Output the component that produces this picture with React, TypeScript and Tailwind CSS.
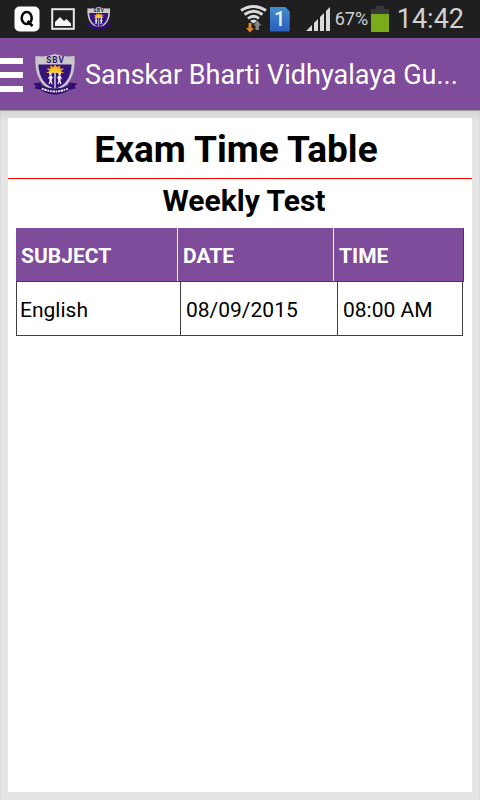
import React from "react";

const columns = ["SUBJECT", "DATE", "TIME"];
const exams = [{ subject: "English", date: "08/09/2015", time: "08:00 AM" }];

function Crest({ className, ribbonText = true }: { className: string; ribbonText?: boolean }) {
  return (
    <svg viewBox="0 0 46 42" preserveAspectRatio="none" className={className} aria-hidden="true">
      <path d="M2.500 2 Q13 3.500 22.500 0 Q32 3.500 42.500 2 Q43.500 17 38 26 Q34 33 22.500 38 Q11 33 7 26 Q1.500 17 2.500 2Z" fill="#c9c7ca" />
      <path d="M5.500 10.500 H39.500 Q39 20 35 26 Q31 32 22.500 35 Q14 32 10 26 Q6 20 5.500 10.500Z" fill="#35127c" />
      <path d="M13 19 L17 17 L13.500 14.500 L18 14.500 L17.500 11.500 L21 13 L22.500 10.500 L24.500 13 L28 11.500 L27.500 14.500 L32 14.500 L28.500 17 L32 19Z" fill="#f6a81b" />
      <path d="M16 19 Q22.500 9 29 19Z" fill="#ffcb2e" />
      <path d="M22.500 17 V35" stroke="#c9c7ca" strokeWidth="1.600" />
      <circle cx="17.800" cy="19.800" r="1.300" fill="#fff" />
      <circle cx="27.200" cy="19.800" r="1.300" fill="#fff" />
      <path d="M18 21.500 v5 M27 21.500 v5" stroke="#fff" strokeWidth="2.400" fill="none" />
      <path d="M15.800 24.500 l2 -2 l2.500 1.500 M18 26 l-1.500 4 M18 26 l1.500 4 M29.200 24.500 l-2 -2 l-2.500 1.500 M27 26 l-1.500 4 M27 26 l1.500 4" stroke="#fff" strokeWidth="1.200" fill="none" />
      <path d="M0 29.500 L8 28.500 L9 31.500 Q22.500 37.500 36 31.500 L37 28.500 L45.500 29.500 L42.500 32 L44 34.500 L38 35.500 Q22.500 45.500 7 35.500 L1.500 34.500 L3 32Z" fill="#2c0e6b" />
      <text x="23" y="8.800" textAnchor="middle" fontSize="8.500" fontWeight="700" letterSpacing="1" fill="#2c1464" fontFamily="Roboto, sans-serif">SBV</text>
      {ribbonText && <path d="M9 34.500 Q22.500 40.500 36 34.500" stroke="#e4dfee" strokeWidth="2" strokeDasharray="2 .6 3 .6 1.500 .8" fill="none" />}
    </svg>
  );
}

function StatusBar() {
  return (
    <div className="flex h-[38px] items-center justify-between bg-[#1f1f1f] pr-4 pl-[14px] text-[#d2d2d2]">
      <div className="flex items-center gap-[11px]">
        <svg viewBox="0 0 26 26" className="size-[26px]" aria-hidden="true">
          <rect x=".5" y=".5" width="25" height="25" rx="5" fill="#fff" />
          <ellipse cx="12.700" cy="12" rx="5" ry="6" fill="none" stroke="#050505" strokeWidth="2.600" />
          <path d="M13.500 15 L18.500 20" stroke="#050505" strokeWidth="2.600" />
        </svg>
        <svg viewBox="0 0 24 22" className="h-[22px] w-6" aria-hidden="true">
          <rect x="1.200" y="1.200" width="21.600" height="19.600" fill="none" stroke="#e9e9e9" strokeWidth="2" />
          <path d="M4 18 V14 L9 9 L13 13 L15.500 11 L20 15.500 V18Z" fill="#f4f4f4" />
        </svg>
        <Crest className="h-6 w-[26px]" ribbonText={false} />
      </div>
      <div className="flex items-center">
        <svg viewBox="0 0 28 28" className="mr-[2px] h-7 w-7" aria-hidden="true">
          <g fill="none" stroke="#dcdcdc" strokeWidth="2.800">
            <path d="M1 5.500 Q13.500 -2.500 26 5.500" />
            <path d="M4.500 9.500 Q13.500 3 22.500 9.500" />
            <path d="M8 13.500 Q13.500 9 19 13.500" />
          </g>
          <path d="M10 16 Q13.500 13 17 16 L13.500 18.500Z" fill="#dcdcdc" />
          <path d="M8.500 18 h3 v5 h2.500 L10 27.500 L6 23 H8.500Z" fill="#df8b2c" />
          <path d="M15.500 25 V20.500 H13.500 L17.300 15.500 L21.500 20.500 H19 V25Z" fill="#858585" />
        </svg>
        <div className="grid h-[25px] w-5 place-items-center bg-linear-to-b from-[#438fcb] to-[#2c5cbc] text-xl leading-6 font-medium text-[#eeeeee] [clip-path:polygon(0_0,76%_0,100%_20%,100%_100%,0_100%)]">1</div>
        <svg viewBox="0 0 24 24" className="ml-4 size-6" aria-hidden="true">
          <path d="M0 24 L6 18 V24Z M8 16 L12 12 V24 H8Z M14 10 L18 6 V24 H14Z M20 4 L24 0 V24 H20Z" fill="#dadada" />
        </svg>
        <span className="ml-[5px] w-[33px] text-lg">67%</span>
        <svg viewBox="0 0 18 26" className="ml-[3px] h-[26px] w-[18px]" aria-hidden="true">
          <path d="M0 3 H5 V0 H13 V3 H18 V26 H0Z" fill="#393939" />
          <path d="M0 8 H18 V26 H0Z" fill="#7aac19" />
        </svg>
        <span className="ml-2 text-[27px] leading-8">14:42</span>
      </div>
    </div>
  );
}

export default function App() {
  return (
    <div className="flex min-h-screen flex-col bg-[#e4e4e4] font-[Roboto,sans-serif] text-black">
      <StatusBar />
      <header className="flex h-[72px] items-center bg-[#7f4b9b] pt-[2px] pr-4">
        <button type="button" aria-label="Open menu" className="flex w-[33px] shrink-0 items-center">
          <span className="flex w-[23px] flex-col gap-2">
            <span className="h-[6px] bg-white" />
            <span className="h-[6px] bg-white" />
            <span className="h-[6px] bg-white" />
          </span>
        </button>
        <Crest className="h-[42px] w-[45px] shrink-0" />
        <h1 className="ml-[7px] truncate text-[27px] leading-9 text-white">Sanskar Bharti Vidhyalaya Gu...</h1>
      </header>
      <div className="flex grow flex-col bg-linear-to-b from-[#d5d5d5] to-[#e4e4e4] to-[12px] p-2 shadow-[inset_0_1px_1px_#999999]">
        <main className="grow bg-white">
          <h2 className="border-b border-[#ff0000] pt-2 pr-2 pb-1 text-center text-[37px] leading-12 font-bold">Exam Time Table</h2>
          <h3 className="pt-1 pb-[9px] pl-2 text-center text-[30px] leading-9 font-bold">Weekly Test</h3>
          <div className="px-2">
            <table className="block w-full text-left text-[21px] leading-8">
              <thead className="block">
                <tr className="grid h-[54px] grid-cols-[162fr_156fr_129fr] border-r border-b border-[#404040] bg-[#7f4b9b] text-white">
                  {columns.map((column) => (
                    <th key={column} scope="col" className="flex items-center border-r border-white px-[5px] pt-[2px] font-bold last:border-r-0">{column}</th>
                  ))}
                </tr>
              </thead>
              <tbody className="block">
                {exams.map((exam) => (
                  <tr key={exam.date} className="mr-px grid h-[54px] grid-cols-[164fr_157fr_125fr] border-b border-l border-[#404040]">
                    <td className="flex items-center border-r border-[#404040] px-[3px] pt-[2px]">{exam.subject}</td>
                    <td className="flex items-center border-r border-[#404040] px-[5px] pt-[2px]">{exam.date}</td>
                    <td className="flex items-center border-r border-[#404040] px-[5px] pt-[2px]">{exam.time}</td>
                  </tr>
                ))}
              </tbody>
            </table>
          </div>
        </main>
      </div>
    </div>
  );
}
